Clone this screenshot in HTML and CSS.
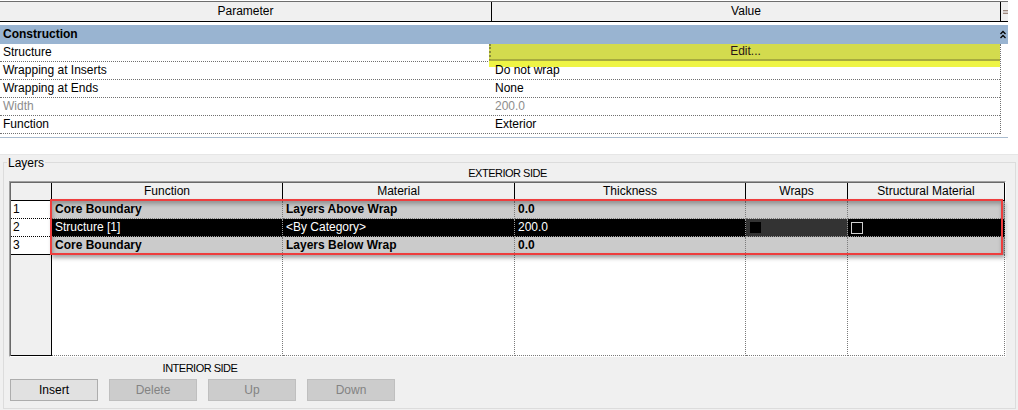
FILE: index.html
```html
<!DOCTYPE html>
<html>
<head>
<meta charset="utf-8">
<link rel="stylesheet" href="styles.css">
</head>
<body>
<div class="props">
  <div class="phead">
    <div class="hc hc-param">Parameter</div>
    <div class="hc hc-val">Value</div>
    <div class="hc hc-eq"><svg width="6" height="6" viewBox="0 0 6 6"><path d="M0 1.5H6M0 4.5H6" stroke="#6a4a3a" stroke-width="1"/></svg></div>
  </div>
  <div class="cat">
    <span>Construction</span>
    <svg class="chev" width="6" height="9" viewBox="0 0 6 9"><path d="M0.5 4L3 1.5L5.5 4M0.5 8L3 5.5L5.5 8" fill="none" stroke="#000" stroke-width="1.3"/></svg>
  </div>
  <div class="prows">
    <div class="prow"><div class="pn">Structure</div><div class="pv edit">Edit...</div></div>
    <div class="prow"><div class="pn">Wrapping at Inserts</div><div class="pv">Do not wrap</div></div>
    <div class="prow"><div class="pn">Wrapping at Ends</div><div class="pv">None</div></div>
    <div class="prow dim"><div class="pn">Width</div><div class="pv">200.0</div></div>
    <div class="prow"><div class="pn">Function</div><div class="pv">Exterior</div></div>
  </div>
  <div class="pline"></div>
</div>
<div class="layers">
  <div class="group">
    <div class="legend">Layers</div>
    <div class="side ext">EXTERIOR SIDE</div>
    <div class="tframe">
      <div class="tbl">
        <div class="tr th">
          <div class="c"></div>
          <div class="c">Function</div>
          <div class="c">Material</div>
          <div class="c">Thickness</div>
          <div class="c">Wraps</div>
          <div class="c">Structural Material</div>
        </div>
        <div class="tr r1">
          <div class="rh">1</div>
          <div class="td">Core Boundary</div>
          <div class="td">Layers Above Wrap</div>
          <div class="td">0.0</div>
          <div class="td"></div>
          <div class="td"></div>
        </div>
        <div class="tr r2">
          <div class="rh focus">2</div>
          <div class="td">Structure [1]</div>
          <div class="td">&lt;By Category&gt;</div>
          <div class="td">200.0</div>
          <div class="td wrapc"><span class="chk-fill"></span></div>
          <div class="td"><span class="chk-box"></span></div>
        </div>
        <div class="tr r3">
          <div class="rh">3</div>
          <div class="td">Core Boundary</div>
          <div class="td">Layers Below Wrap</div>
          <div class="td">0.0</div>
          <div class="td"></div>
          <div class="td"></div>
        </div>
        <div class="tr filler">
          <div class="rh"></div>
          <div class="td"></div>
          <div class="td"></div>
          <div class="td"></div>
          <div class="td"></div>
          <div class="td"></div>
        </div>
        <div class="redbox"></div>
      </div>
    </div>
    <div class="bottom">
      <div class="side int">INTERIOR SIDE</div>
      <div class="btns">
        <div class="btn">Insert</div>
        <div class="btn off">Delete</div>
        <div class="btn off">Up</div>
        <div class="btn off">Down</div>
      </div>
    </div>
  </div>
</div>
</body>
</html>
```
FILE: styles.css
```css
* { box-sizing: border-box; }
html, body { margin: 0; padding: 0; }
body {
  width: 1018px;
  height: 410px;
  overflow: hidden;
  background: #fff;
  font-family: "Liberation Sans", Arial, sans-serif;
  font-size: 12px;
  color: #000;
}

/* ---------- properties ---------- */
.props {
  height: 154px;
  padding-top: 1px;
}
.phead {
  width: 1008px;
  height: 21px;
  border-top: 1px solid #6e6e6e;
  border-bottom: 1px solid #000;
  background: #f0f0f0;
  display: grid;
  grid-template-columns: 492px 509px 7px;
}
.hc {
  line-height: 19px;
  text-align: center;
}
.hc-param, .hc-val { border-right: 1px solid #000; }
.hc-eq { display: flex; align-items: center; padding-left: 2px; padding-top: 1px; }
.hc-eq svg { display: block; }

.cat {
  margin-top: 3px;
  width: 1008px;
  height: 19px;
  background: #99b4d1;
  font-weight: bold;
  line-height: 19px;
  padding-left: 3px;
  display: flex;
  justify-content: space-between;
  align-items: center;
  padding-right: 2px;
}
.chev { display: block; }

.prows {
  width: 1001px;
  border-right: 1px dotted #707070;
}
.prow {
  height: 18px;
  border-bottom: 1px dotted #707070;
  display: grid;
  grid-template-columns: 489px 1fr;
  line-height: 17px;
}
.pn { padding-left: 3px; white-space: nowrap; }
.pv { padding-left: 6px; white-space: nowrap; }
.prow.dim { color: #8d8d8d; }
.edit {
  height: 17px;
  padding-left: 0;
  text-align: center;
  background: #d3db4e;
  border-left: 2px dotted #8a8c3a;
  border-bottom: 2px solid #a6aa3e;
  line-height: 15px;
  color: #2a1616;
  box-shadow: 0 6px 0 #eef445;
}
.pline {
  margin-top: 3px;
  width: 1008px;
  height: 1px;
  background: #a9bccf;
}

/* ---------- layers ---------- */
.layers {
  height: 256px;
  background: #f0f0f0;
  padding-top: 7px;
  border-top: 1px solid #e6e6e6;
}
.group {
  margin: 0 2px 0 3px;
  height: 247px;
  border: 1px solid #dcdcdc;
  padding: 0 10px 0 6px;
}
.legend {
  width: fit-content;
  margin: -7px 0 -4px -3px;
  padding: 0 1px;
  line-height: 14px;
  background: #f0f0f0;
}
.side {
  line-height: 14px;
  text-align: center;
  font-size: 11px;
  letter-spacing: -0.5px;
}
.ext { width: 995px; }

.tframe {
  margin-top: 1px;
  margin-left: -1px;
  width: 997px;
  border: 1px solid;
  border-color: #a0a0a0 #ffffff #ffffff #a0a0a0;
}
.tbl {
  position: relative;
  background: #fff;
  border-top: 1px solid #696969;
  border-left: 1px solid #696969;
}
.tr {
  display: grid;
  grid-template-columns: 41px 231px 232px 231px 102px 157px;
  height: 18px;
  line-height: 17px;
}
.th .c {
  background: #f0f0f0;
  border-right: 1px solid #000;
  border-bottom: 1px solid #000;
  text-align: center;
  white-space: nowrap;
}
.rh {
  background: #fff;
  border-right: 1px solid #000;
  border-bottom: 1px solid #000;
  padding-left: 2px;
}
.rh.focus {
  border-top: 1px dotted #000;
  border-bottom: 1px dotted #000;
  line-height: 15px;
  margin-top: -1px;
  height: 19px;
  padding-top: 1px;
}
.td {
  border-right: 1px dotted #7a7a7a;
  border-bottom: 1px dotted #7a7a7a;
  padding-left: 3px;
  white-space: nowrap;
  overflow: hidden;
}
.r1 .td, .r3 .td {
  background: #cbcbcb;
  font-weight: bold;
}
.r2 .td {
  background: #000;
  color: #fff;
  border-color: #9a9a9a;
}
.r2 .td.wrapc { background: #333333; }
.r2 .td:first-of-type { padding-left: 2px; }
.chk-fill {
  display: block;
  width: 11px;
  height: 11px;
  margin: 3px 0 0 1px;
  background: #000;
}
.chk-box {
  display: block;
  width: 12px;
  height: 12px;
  margin: 3px 0 0 0;
  border: 1px solid #d0d0d0;
}
.filler { height: 101px; }
.filler .rh { background: #f0f0f0; }

.redbox {
  position: absolute;
  left: 39px;
  top: 16px;
  width: 953px;
  height: 56px;
  border: 2px solid #ee3e3e;
  box-shadow: 2px 3px 4px rgba(0,0,0,0.35), inset 1px 3px 4px rgba(0,0,0,0.28);
  pointer-events: none;
}

.bottom {
  margin-top: 4px;
}
.int { width: 380px; }
.btns {
  margin-top: 4px;
  display: flex;
  gap: 11px;
}
.btn {
  width: 88px;
  height: 22px;
  line-height: 20px;
  text-align: center;
  background: #e1e1e1;
  border: 1px solid #adadad;
}
.btn.off {
  background: #cccccc;
  border-color: #bfbfbf;
  color: #838383;
}
```
